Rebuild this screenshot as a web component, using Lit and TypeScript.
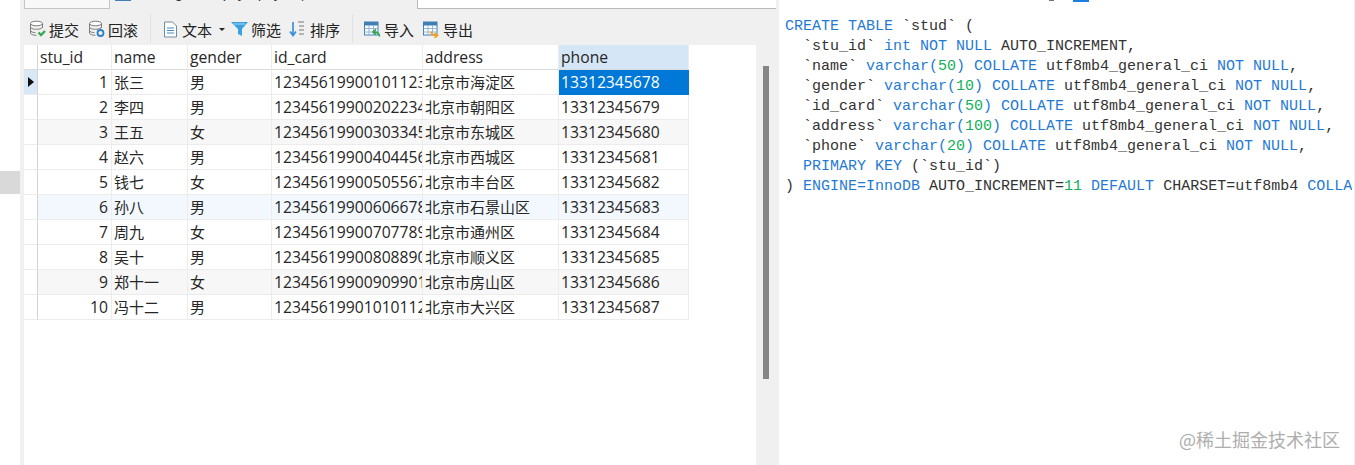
import { LitElement, html, css, svg } from "lit";
import { customElement } from "lit/decorators.js";

const rows = [
  ["1", "张三", "男", "123456199001011234", "北京市海淀区", "13312345678"],
  ["2", "李四", "男", "123456199002022345", "北京市朝阳区", "13312345679"],
  ["3", "王五", "女", "123456199003033456", "北京市东城区", "13312345680"],
  ["4", "赵六", "男", "123456199004044567", "北京市西城区", "13312345681"],
  ["5", "钱七", "女", "123456199005055678", "北京市丰台区", "13312345682"],
  ["6", "孙八", "男", "123456199006066789", "北京市石景山区", "13312345683"],
  ["7", "周九", "女", "123456199007077890", "北京市通州区", "13312345684"],
  ["8", "吴十", "男", "123456199008088901", "北京市顺义区", "13312345685"],
  ["9", "郑十一", "女", "123456199009099012", "北京市房山区", "13312345686"],
  ["10", "冯十二", "男", "123456199010101123", "北京市大兴区", "13312345687"],
];
const heads = ["stu_id", "name", "gender", "id_card", "address", "phone"];

const dbIcon = (badge: unknown) => html`<svg width="18" height="18" viewBox="0 0 18 18" fill="none">
  <ellipse cx="7.5" cy="3.5" rx="6" ry="2.3" stroke="#7b7b7b" fill="#fff"/>
  <path d="M1.5 3.5V13c0 1.3 2.5 2.3 6 2.3M13.5 3.5V8M1.5 7c0 1.3 2.7 2.3 6 2.3s6-1 6-2.3M1.5 10.5c0 1.2 2.3 2.1 5 2.2" stroke="#7b7b7b"/>
  ${badge}
</svg>`;
const tableIcon = (arrow: unknown) => html`<svg width="17" height="17" viewBox="0 0 17 17" fill="none">
  <rect x="0.5" y="1" width="13.5" height="13" fill="#fff" stroke="#3f7fb5"/>
  <rect x="0.5" y="1" width="13.5" height="3.5" fill="#3f7fb5"/>
  <path d="M5 4.5V14M9.5 4.5V14M.5 7.5H14M.5 11H14" stroke="#8fb6d6"/>
  ${arrow}
</svg>`;

@customElement("app-root")
export class AppRoot extends LitElement {
  static styles = css`
    :host { display: flex; width: 1355px; height: 465px; overflow: hidden; background: #fff; font-family: "Open Sans", "Noto Sans CJK SC", sans-serif; color: #262626; }
    .gutter { width: 20px; flex: none; background: #fff; }
    .gutter i { display: block; margin-top: 171px; height: 23px; background: #d9d9d9; }
    .strip { width: 4px; flex: none; background: #f0f0f0; }
    .main { width: 755px; flex: none; background: #f0f0f0; display: flex; flex-direction: column; }
    .tabs { height: 10px; display: flex; overflow: hidden; flex: none; }
    .tab0 { width: 86px; height: 9px; background: #f8f8f8; border: 1px solid #c4c4c4; border-top: 0; box-sizing: border-box; flex: none; }
    .tab1 { width: 307px; height: 9px; display: flex; padding-left: 5px; overflow: hidden; box-sizing: border-box; flex: none; }
    .tab1 b { display: block; width: 16px; height: 1px; background: #3f7fb5; flex: none; margin-right: 43px; }
    .tab1 span { display: block; white-space: pre; font: 15px/18px "Liberation Mono", monospace; margin-top: -14px; color: #333; }
    .input { width: 359px; height: 9px; background: #fff; border: 1px solid #b9b9b9; border-width: 0 0 1px 1px; box-sizing: border-box; flex: none; }
    .bar { height: 35px; display: flex; align-items: center; padding: 3px 0 0 5px; font-size: 15px; flex: none; box-sizing: border-box; color: #222; }
    .btn { display: flex; align-items: center; gap: 2px; white-space: nowrap; }
    .m-save { margin-right: 9px; }
    .m-undo { margin-right: 12px; }
    .m-text { margin-left: 12px; }
    .m-text span { margin-left: 2px; }
    .m-filter { margin-left: 6px; }
    .m-sort { margin: 0 12px 0 8px; gap: 4px; }
    .m-imp { margin-left: 11px; gap: 3px; }
    .m-exp { margin-left: 9px; gap: 3px; }
    .sep { width: 1px; height: 29px; background: #e2e2e2; flex: none; margin-top: -2px; }
    .caret { width: 0; height: 0; border: 3px solid transparent; border-top: 3px solid #222; border-bottom: 0; margin-left: 5px; }
    .content { flex: 1; display: flex; min-height: 0; }
    .grid { width: 732px; background: #fff; flex: none; }
    .row { display: grid; grid-template-columns: 14px 74px 76px 84px 151px 136px 130px; height: 25px; font-size: 15.7px; line-height: 25px; width: 665px; }
    .row.alt { background: #f7f7f7; }
    .row.hl { background: #f2f8fd; }
    .cell { border-right: 1px solid #ececec; border-bottom: 1px solid #ececec; padding: 0 2px; overflow: hidden; white-space: nowrap; box-sizing: border-box; }
    .cjk { font-size: 15px; }
    .num { text-align: right; padding-right: 3px; }
    .ind { padding: 0; background: #fff; border-right-color: #d4d4d4; display: flex; align-items: center; justify-content: center; }
    .row.alt .ind, .row.hl .ind { background: #fff; }
    .ind.cur { background: #d9e8f6; }
    .ind.cur::before { content: ""; border: 5px solid transparent; border-left: 6px solid #111; border-right: 0; }
    .head .cell { border-bottom-color: #dcdcdc; }
    .head .active { background: #d5e7f7; }
    .sel { background: #0078d7; color: #fff; border-color: #0078d7; }
    .idc { padding-right: 0; }
    .scroll { width: 23px; flex: none; padding: 21px 0 0 7px; box-sizing: border-box; }
    .scroll i { display: block; width: 6px; height: 313px; background: #868686; }
    .code { flex: 1; min-width: 0; background: #fff; position: relative; overflow: hidden; padding-left: 6px; }
    .marks { height: 17px; display: flex; align-items: flex-start; }
    .marks i { display: block; height: 1px; }
    .marks .g { width: 5px; margin-left: 264px; background: #777; }
    .marks .b { width: 16px; margin-left: 19px; background: #1b7fe0; height: 2px; }
    pre { margin: 0; font: 15px/20px "Liberation Mono", monospace; color: #333; white-space: pre; }
    .k { color: #1f7ad6; }
    .n { color: #12b05a; }
    .wm { position: absolute; right: 15px; top: 426px; font-size: 18px; line-height: 26px; color: #aeaeae; white-space: nowrap; font-family: "Noto Sans CJK SC", sans-serif; }
    .edge { position: absolute; right: 0; top: 0; bottom: 0; width: 3px; background: #fff; border-right: 1px solid #f0f0f0; box-sizing: border-box; }
  `;

  render() {
    return html`
      <div class="gutter"><i></i></div>
      <div class="strip"></div>
      <div class="main">
        <div class="tabs">
          <div class="tab0"></div>
          <div class="tab1"><b></b><span>g    ( y | y  ,</span></div>
          <div class="input"></div>
        </div>
        <div class="bar">
          <div class="btn m-save">${dbIcon(svg`<path d="M9.5 12.5l2.5 2.5 4-4" stroke="#3aa655" stroke-width="2.4"/>`)}<span>提交</span></div>
          <div class="btn m-undo">${dbIcon(svg`<circle cx="12.5" cy="13" r="3" stroke="#2f7fc8" stroke-width="1.8"/>`)}<span>回滚</span></div>
          <div class="sep"></div>
          <div class="btn m-text">
            <svg width="15" height="17" viewBox="0 0 15 17" fill="none"><path d="M1.5 1H9.5L13.5 5V16H1.5Z" fill="#fff" stroke="#6f8ba3"/><path d="M4 7H11M4 9.5H11M4 12H11" stroke="#3f8ac9"/></svg>
            <span>文本</span><i class="caret"></i>
          </div>
          <div class="btn m-filter">
            <svg width="18" height="16" viewBox="0 0 18 16"><path d="M0 1H17L11 8V15L7 13V8Z" fill="#3aa0de"/><path d="M3 3H14" stroke="#a9d8f3"/></svg>
            <span>筛选</span></div>
          <div class="btn m-sort">
            <svg width="17" height="18" viewBox="0 0 17 18" fill="none"><path d="M4 2V15M1 11.5L4 15.5L7 11.5" stroke="#3a8fd8" stroke-width="1.7"/><path d="M9 2H15M10 6H15M10 10H15M10 14H15" stroke="#777"/></svg>
            <span>排序</span></div>
          <div class="sep"></div>
          <div class="btn m-imp">${tableIcon(svg`<path d="M15.5 15.5C15.5 12.5 13 11 9.5 11M12 8.5L9 11L12 13.5" stroke="#3aa655" stroke-width="1.7" fill="none"/>`)}<span>导入</span></div>
          <div class="btn m-exp">${tableIcon(svg`<path d="M8 10.5C8 13.5 10.5 14.5 14 14.5M11.5 12L14.5 14.5L11.5 17" stroke="#f0a030" stroke-width="1.7" fill="none"/>`)}<span>导出</span></div>
        </div>
        <div class="content">
          <div class="grid">
            <div class="row head">
              <div class="cell ind"></div>
              ${heads.map((h, i) => html`<div class="cell ${i === 5 ? "active" : ""}">${h}</div>`)}
            </div>
            ${rows.map((r, i) => html`
              <div class="row ${i === 5 ? "hl" : i === 2 || i === 8 ? "alt" : ""}">
                <div class="cell ind ${i === 0 ? "cur" : ""}"></div>
                <div class="cell num">${r[0]}</div>
                <div class="cell cjk">${r[1]}</div>
                <div class="cell cjk">${r[2]}</div>
                <div class="cell idc">${r[3]}</div>
                <div class="cell cjk">${r[4]}</div>
                <div class="cell ${i === 0 ? "sel" : ""}">${r[5]}</div>
              </div>`)}
          </div>
          <div class="scroll"><i></i></div>
        </div>
      </div>
      <div class="code">
        <div class="marks"><i class="g"></i><i class="b"></i></div>
        <pre><span class="k">CREATE TABLE</span> \`stud\` (
  \`stu_id\` <span class="k">int NOT NULL</span> AUTO_INCREMENT,
  \`name\` <span class="k">varchar(</span><span class="n">50</span><span class="k">) COLLATE</span> utf8mb4_general_ci <span class="k">NOT NULL</span>,
  \`gender\` <span class="k">varchar(</span><span class="n">10</span><span class="k">) COLLATE</span> utf8mb4_general_ci <span class="k">NOT NULL</span>,
  \`id_card\` <span class="k">varchar(</span><span class="n">50</span><span class="k">) COLLATE</span> utf8mb4_general_ci <span class="k">NOT NULL</span>,
  \`address\` <span class="k">varchar(</span><span class="n">100</span><span class="k">) COLLATE</span> utf8mb4_general_ci <span class="k">NOT NULL</span>,
  \`phone\` <span class="k">varchar(</span><span class="n">20</span><span class="k">) COLLATE</span> utf8mb4_general_ci <span class="k">NOT NULL</span>,
  <span class="k">PRIMARY KEY</span> (\`stu_id\`)
) <span class="k">ENGINE=InnoDB</span> AUTO_INCREMENT=<span class="n">11</span> <span class="k">DEFAULT</span> CHARSET=utf8mb4 <span class="k">COLLATE</span></pre>
        <div class="wm">@稀土掘金技术社区</div>
        <div class="edge"></div>
      </div>
    `;
  }
}
